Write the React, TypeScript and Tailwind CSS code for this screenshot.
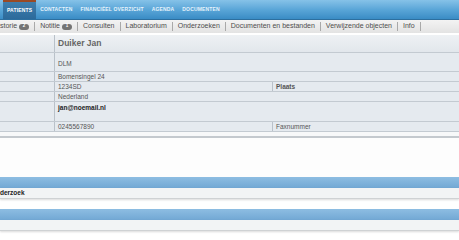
import React from "react";

const navItems = ["PATIENTS", "CONTACTEN", "FINANCIËEL OVERZICHT", "AGENDA", "DOCUMENTEN"];

function Badge({ n }: { n: string }) {
  return (
    <span className="ml-[2px] inline-flex h-[6px] w-[10px] items-center justify-center rounded-full bg-[#747474] text-[4.5px] font-bold leading-none text-white">
      {n}
    </span>
  );
}

function Tab({ children, first }: { children: React.ReactNode; first?: boolean }) {
  return (
    <div className={`flex h-[9px] items-center border-r border-[#a9a9a9] ${first ? "pr-[5px]" : "px-[5px]"}`}>
      {children}
    </div>
  );
}

function Row({
  h,
  children,
  right,
  align = "center",
}: {
  h: string;
  children?: React.ReactNode;
  right?: React.ReactNode;
  align?: "center" | "end";
}) {
  return (
    <div className={`flex ${h} border-b border-[#c3cad1]`}>
      <div className="w-[55px] shrink-0 border-r border-[#b9c1c9]" />
      <div className={`flex w-[217px] shrink-0 px-[3px] ${align === "end" ? "items-end pb-[2px]" : "items-center"}`}>
        {children}
      </div>
      <div className={`flex flex-1 items-center px-[3px] ${right ? "border-l border-[#b9c1c9]" : ""}`}>{right}</div>
    </div>
  );
}

export default function App() {
  return (
    <div
      className="relative h-[240px] w-[459px] overflow-hidden bg-white"
      style={{ fontFamily: '"Liberation Sans", Arial, sans-serif' }}
    >
      {/* top nav */}
      <div className="flex h-[20px] items-stretch border-b border-[#2d6f9f] bg-gradient-to-b from-[#86c2e8] via-[#5aa6d8] to-[#3a8cc5] pl-[3px]">
        {navItems.map((t, i) => (
          <div
            key={t}
            className={`flex items-center px-[4px] text-[5px] font-bold tracking-[0.15px] ${
              i === 0
                ? "border-t-[2px] border-[#9a4a25] bg-gradient-to-b from-[#3f7fae] to-[#2c6a9b] text-white"
                : "text-[#e6f3fb]"
            }`}
          >
            {t}
          </div>
        ))}
      </div>

      {/* tabs */}
      <div className="flex h-[15px] items-center border-b-[2px] border-white bg-gradient-to-b from-[#f3f3f3] to-[#e3e3e3] text-[7px] text-[#4e4e4e]">
        <Tab first>
          <span>storie</span>
          <Badge n="2" />
        </Tab>
        <Tab>
          <span>Notitie</span>
          <Badge n="1" />
        </Tab>
        <Tab>Consulten</Tab>
        <Tab>Laboratorium</Tab>
        <Tab>Onderzoeken</Tab>
        <Tab>Documenten en bestanden</Tab>
        <Tab>Verwijzende objecten</Tab>
        <Tab>Info</Tab>
      </div>

      {/* table */}
      <div className="border-b-[2px] border-[#c4c9ce] bg-[#e5eaef] text-[6.5px] text-[#555]">
        <div className="flex h-[18px] border-b border-[#c3cad1] bg-gradient-to-b from-[#eef1f4] to-[#e2e7ec]">
          <div className="w-[55px] shrink-0 border-r border-[#b9c1c9]" />
          <div className="flex items-center px-[3px] text-[8.5px] font-bold text-[#666]">Duiker Jan</div>
        </div>
        <Row h="h-[19px]" align="end">DLM</Row>
        <Row h="h-[10px]">Bomensingel 24</Row>
        <Row h="h-[10px]" right={<span className="font-bold">Plaats</span>}>1234SD</Row>
        <Row h="h-[10px]">Nederland</Row>
        <Row h="h-[20px]">
          <span className="-mt-[8px] font-bold text-[#222]">jan@noemail.nl</span>
        </Row>
        <Row h="h-[10px]" right={<span>Faxnummer</span>}>0245567890</Row>
        <div className="h-[4px] bg-[#f7f8f9]" />
      </div>

      {/* white space */}
      <div className="h-[39px] bg-[#fdfdfd]" />

      {/* bottom panels */}
      <div className="h-[11px] bg-gradient-to-b from-[#8dbde2] to-[#72a8d4]" />
      <div className="flex h-[11px] items-center border-b border-[#cfd2d4] bg-[#f2f4f5] text-[6.5px] font-bold text-[#222] shadow-[0_1px_2px_rgba(0,0,0,0.15)]">
        <span>derzoek</span>
      </div>
      <div className="h-[10px]" />
      <div className="h-[11px] bg-gradient-to-b from-[#8dbde2] to-[#72a8d4]" />
      <div className="h-[11px] border-b border-[#cfd2d4] bg-[#f2f4f5] shadow-[0_1px_2px_rgba(0,0,0,0.15)]" />
    </div>
  );
}
